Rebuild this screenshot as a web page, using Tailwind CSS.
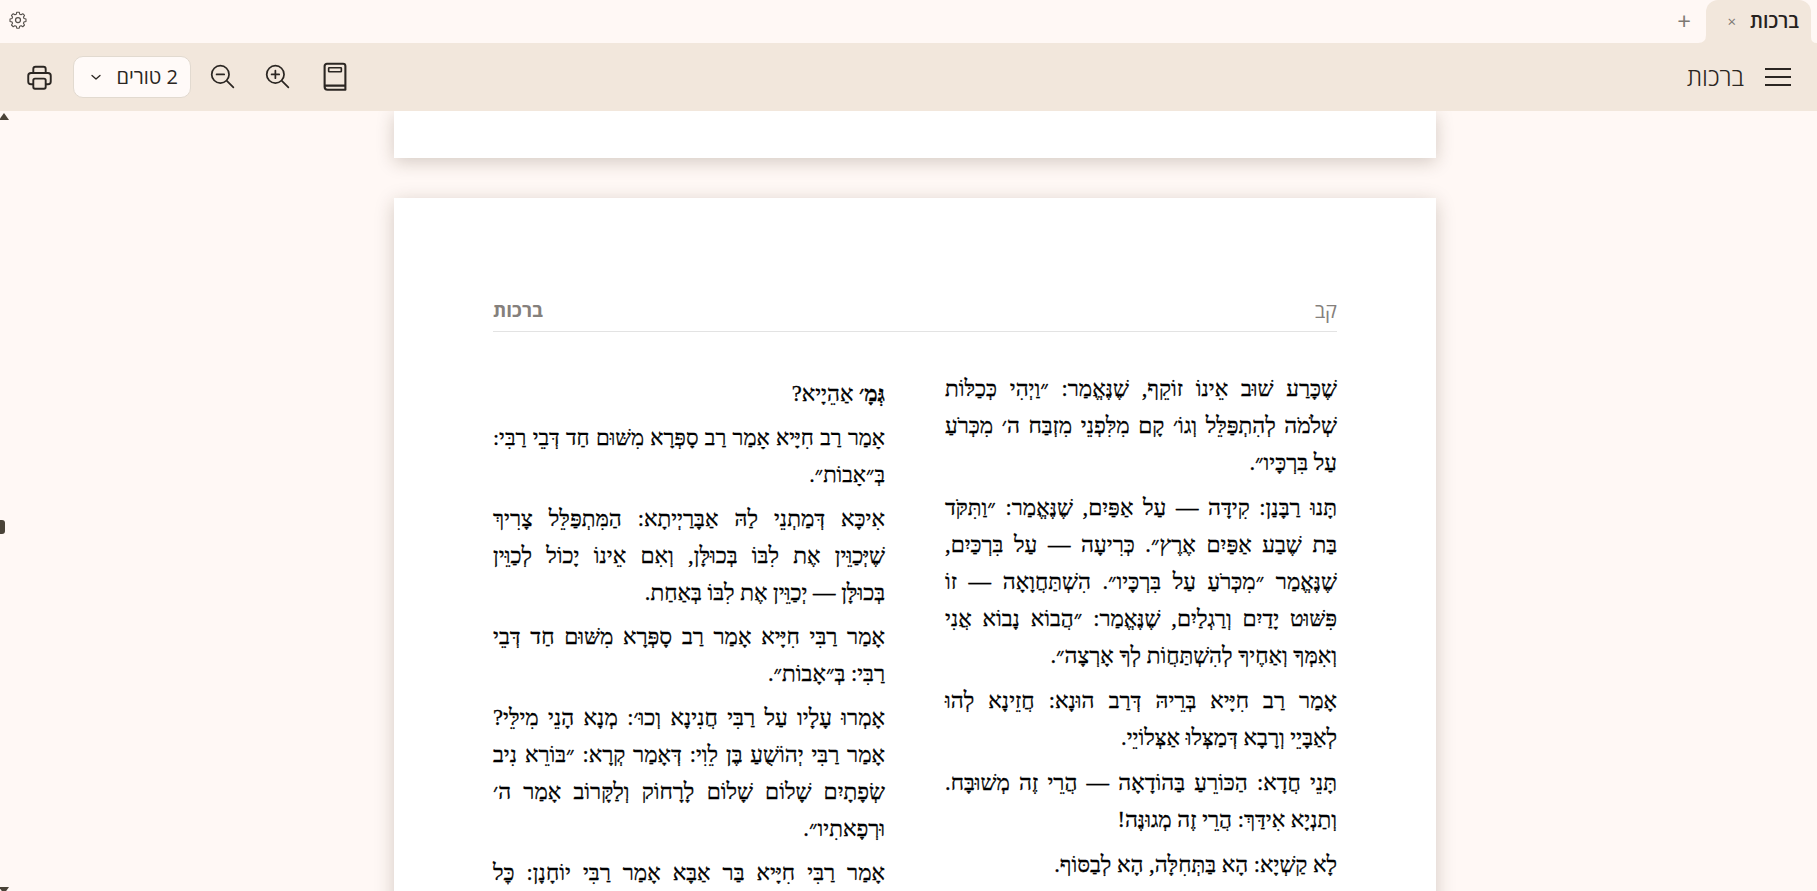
<!DOCTYPE html>
<html lang="he">
<head>
  <meta charset="UTF-8" />
  <meta name="viewport" content="width=device-width, initial-scale=1.0"/>
  <title>ברכות</title>
  <script src="https://cdn.jsdelivr.net/npm/@tailwindcss/browser@4"></script>
</head>
<body class="h-screen overflow-hidden bg-[#fff8f5] font-['Open_Sans','Liberation_Sans',sans-serif] text-[#2b2622]">

  <!-- tab bar -->
  <div class="h-[43px] flex items-center justify-between">
    <button class="ml-[8px] mb-[4px] text-[#55504b]">
      <svg width="20" height="20" viewBox="0 0 24 24" fill="none" stroke="currentColor" stroke-width="1.5" stroke-linecap="round" stroke-linejoin="round"><path d="M10.3 2.6h3.4l.6 2.7 1.9.8 2.3-1.5 2.4 2.4-1.5 2.3.8 1.9 2.7.6v3.4l-2.7.6-.8 1.9 1.5 2.3-2.4 2.4-2.3-1.500-1.900.8-.6 2.7h-3.400l-.6-2.700-1.900-.8-2.300 1.500-2.400-2.400 1.500-2.300-.8-1.900-2.700-.6v-3.400l2.700-.6.8-1.900-1.500-2.300 2.400-2.400 2.300 1.500 1.900-.8z" transform="translate(12 12) scale(.88) translate(-12 -13.2)"/><circle cx="12" cy="12" r="3"/></svg>
    </button>
    <div class="flex items-center h-full">
      <span class="text-[#7d7872] text-[24px] leading-none mr-[15px] mb-[2px]">+</span>
      <div class="relative h-full w-[105px] mr-[6px] bg-[#f2e7dc] rounded-t-[12px] flex items-center justify-end pr-[12px] gap-[14px]">
        <svg class="absolute left-[-8px] bottom-0" width="8" height="8" viewBox="0 0 8 8"><path d="M0 8Q8 8 8 0V8z" fill="#f2e7dc"/></svg>
        <svg class="absolute right-[-6px] bottom-0" width="6" height="6" viewBox="0 0 6 6"><path d="M6 6Q0 6 0 0V6z" fill="#f2e7dc"/></svg>
        <span class="text-[#7d7872] text-[15px] leading-none">×</span>
        <span dir="rtl" class="text-[19.500px] font-semibold text-[#26211d] mb-[2px]">ברכות</span>
      </div>
    </div>
  </div>

  <!-- toolbar -->
  <div class="h-[68px] bg-[#f2e7dc] flex items-center justify-between pl-[26px] pr-[26px]">
    <div class="flex items-center">
      <svg width="27" height="27" viewBox="0 0 24 24" fill="none" stroke="#2b2622" stroke-width="1.7" stroke-linejoin="round"><path d="M6.500 8V4.500a2 2 0 0 1 2-2h7a2 2 0 0 1 2 2V8"/><path d="M6.500 18H4.500a2.500 2.500 0 0 1-2.500-2.500V10.500a2.500 2.500 0 0 1 2.500-2.500h15a2.500 2.500 0 0 1 2.500 2.500v5a2.500 2.500 0 0 1-2.500 2.500h-2"/><rect x="6.500" y="13" width="11" height="9" rx="1.500"/></svg>
      <div class="ml-[20px] w-[118px] h-[42px] bg-[#fffaf8] rounded-[10px] border border-[#e2dad0] flex items-center justify-between pl-[16px] pr-[12px]">
        <svg width="12" height="12" viewBox="0 0 12 12" fill="none" stroke="#2b2622" stroke-width="1.300" stroke-linecap="round" stroke-linejoin="round"><path d="M2 4.500 6 8l4-3.500"/></svg>
        <span dir="rtl" class="text-[20px] text-[#2b2622]">2 טורים</span>
      </div>
      <svg class="ml-[18px] -mt-[2px]" width="26" height="26" viewBox="0 0 24 24" fill="none" stroke="#2b2622" stroke-width="1.600" stroke-linecap="round"><circle cx="10.500" cy="10.500" r="8"/><path d="M7 10.500h7M16.500 16.500l6 6"/></svg>
      <svg class="ml-[29px] -mt-[2px]" width="26" height="26" viewBox="0 0 24 24" fill="none" stroke="#2b2622" stroke-width="1.600" stroke-linecap="round"><circle cx="10.500" cy="10.500" r="8"/><path d="M7 10.500h7M10.500 7v7M16.500 16.500l6 6"/></svg>
      <svg class="ml-[32px]" width="26" height="30" viewBox="0 0 22 26" fill="none" stroke="#2b2622" stroke-width="1.800" stroke-linejoin="round"><path d="M2 21.500V3.500a2 2 0 0 1 2-2h14a2 2 0 0 1 2 2v20.500H4.500A2.500 2.500 0 0 1 2 21.500zM2.500 20.500H20"/><rect x="5.500" y="5" width="11" height="3.500" rx=".5" stroke-width="1.400"/></svg>
    </div>
    <div class="flex items-center gap-[21px]">
      <span dir="rtl" class="text-[24.500px] font-light text-[#2b2622]">ברכות</span>
      <div class="w-[26px] flex flex-col gap-[6px]">
        <div class="h-[2px] bg-[#2b2622]"></div>
        <div class="h-[2px] bg-[#2b2622]"></div>
        <div class="h-[2px] bg-[#2b2622]"></div>
      </div>
    </div>
  </div>

  <!-- page viewer -->
  <main class="relative pl-[13px] overflow-hidden h-[780px] font-['Liberation_Serif',serif] text-black">
    <div class="absolute left-0 top-[2px] w-0 h-0 border-l-[5px] border-r-[5px] border-b-[7px] border-l-transparent border-r-transparent border-b-[#4a4338] -translate-x-[1px]"></div>
    <div class="absolute left-0 top-[409px] w-[5px] h-[14px] bg-[#4a4338] rounded-r-[3px]"></div>
    <div class="absolute left-0 bottom-[-3px] w-0 h-0 border-l-[5px] border-r-[5px] border-t-[7px] border-l-transparent border-r-transparent border-t-[#4a4338] -translate-x-[1px]"></div>

    <div class="w-[1042px] mx-auto h-[47px] bg-white shadow-[0_4px_18px_rgba(60,40,20,0.22)]"></div>

    <article dir="rtl" class="w-[1042px] mx-auto mt-[40px] bg-white shadow-[0_4px_18px_rgba(60,40,20,0.22)] px-[99px] pt-[96px] h-[900px]">
      <header class="flex items-center justify-between h-[38px] border-b border-[#e3e3e3] font-['Open_Sans','Liberation_Sans',sans-serif] text-[#85807c] text-[19px]">
        <span class="mb-[4px] text-[20px]">קב</span>
        <span class="font-bold mb-[4px]">ברכות</span>
      </header>

      <div class="grid grid-cols-2 gap-[60px] pt-[38px] text-[22.500px] leading-[37px] text-justify [-webkit-text-stroke:0.3px_black]">
        <div class="flex flex-col gap-[8px]">
          <p>שֶׁכָּרַע שׁוּב אֵינוֹ זוֹקֵף, שֶׁנֶּאֱמַר: ״וַיְהִי כְּכַלּוֹת שְׁלֹמֹה לְהִתְפַּלֵּל וְגוֹ׳ קָם מִלִּפְנֵי מִזְבַּח ה׳ מִכְּרֹעַ עַל בִּרְכָּיו״.</p>
          <p>תָּנוּ רַבָּנַן: קִידָּה — עַל אַפַּיִם, שֶׁנֶּאֱמַר: ״וַתִּקֹּד בַּת שֶׁבַע אַפַּיִם אֶרֶץ״. כְּרִיעָה — עַל בִּרְכַּיִם, שֶׁנֶּאֱמַר ״מִכְּרֹעַ עַל בִּרְכָּיו״. הִשְׁתַּחֲוָאָה — זוֹ פִּשּׁוּט יָדַיִם וְרַגְלַיִם, שֶׁנֶּאֱמַר: ״הֲבוֹא נָבוֹא אֲנִי וְאִמְּךָ וְאַחֶיךָ לְהִשְׁתַּחֲוֹת לְךָ אָרְצָה״.</p>
          <p>אָמַר רַב חִיָּיא בְּרֵיהּ דְּרַב הוּנָא: חֲזֵינָא לְהוּ <span class="whitespace-nowrap">לְאַבָּיֵי וְרָבָא</span> דְּמַצְּלוּ אַצְּלוֹיֵי.</p>
          <p>תָּנֵי חֲדָא: הַכּוֹרֵעַ בַּהוֹדָאָה — הֲרֵי זֶה מְשׁוּבָּח. וְתַנְיָא אִידַּךְ: הֲרֵי זֶה מְגוּנֶּה!</p>
          <p>לָא קַשְׁיָא: הָא בַּתְּחִלָּה, הָא לְבַסּוֹף.</p>
        </div>
        <div class="flex flex-col gap-[7px] pt-[5px]">
          <p><b>גְּמָ׳</b> אַהֵיָיא?</p>
          <p class="text-[22px]">אָמַר רַב חִיָּיא אָמַר רַב סָפְּרָא מִשּׁוּם חַד דְּבֵי רַבִּי: בְּ״אָבוֹת״.</p>
          <p>אִיכָּא דְּמַתְנֵי לַהּ אַבָּרַיְיתָא: הַמִּתְפַּלֵּל צָרִיךְ שֶׁיְּכַוֵּין אֶת לִבּוֹ בְּכוּלָּן, וְאִם אֵינוֹ יָכוֹל לְכַוֵּין <span class="whitespace-nowrap">בְּכוּלָּן — יְכַוֵּין</span> אֶת לִבּוֹ בְּאַחַת.</p>
          <p>אָמַר רַבִּי חִיָּיא אָמַר רַב סָפְּרָא מִשּׁוּם חַד דְּבֵי רַבִּי: בְּ״אָבוֹת״.</p>
          <p>אָמְרוּ עָלָיו עַל רַבִּי חֲנִינָא וְכוּ׳: מְנָא הָנֵי מִילֵּי? אָמַר רַבִּי יְהוֹשֻׁעַ בֶּן לֵוִי: דְּאָמַר קְרָא: ״בּוֹרֵא נִיב שְׂפָתָיִם שָׁלוֹם שָׁלוֹם לָרָחוֹק וְלַקָּרוֹב אָמַר ה׳ וּרְפָאתִיו״.</p>
          <p>אָמַר רַבִּי חִיָּיא בַּר אַבָּא אָמַר רַבִּי יוֹחָנָן: כׇּל הַמִּתְפַּלֵּל</p>
        </div>
      </div>
    </article>
  </main>

</body>
</html>
